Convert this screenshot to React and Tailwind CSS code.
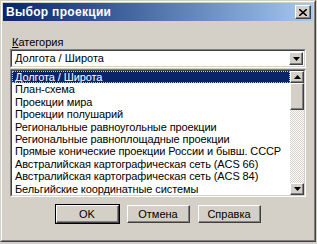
import React from "react";

const items = [
  "Долгота / Широта",
  "План-схема",
  "Проекции мира",
  "Проекции полушарий",
  "Региональные равноугольные проекции",
  "Региональные равноплощадные проекции",
  "Прямые конические проекции России и бывш. СССР",
  "Австралийская картографическая сеть (ACS 66)",
  "Австралийская картографическая сеть (ACS 84)",
  "Бельгийские координатные системы",
];

const raised =
  "border border-t-white border-l-white border-r-[#404040] border-b-[#404040] shadow-[inset_-1px_-1px_0_#808080]";

function Arrow({ up }) {
  return (
    <svg width="7" height="4" viewBox="0 0 7 4">
      {up ? <path d="M3.5 0 L7 4 L0 4 Z" fill="#000" /> : <path d="M0 0 L7 0 L3.5 4 Z" fill="#000" />}
    </svg>
  );
}

function Btn({ children, def }) {
  return (
    <div className={def ? "border border-black" : "border border-transparent"}>
      <div
        className={`w-[63px] h-[18px] flex items-center justify-center bg-[#d4d0c8] text-black text-[11px] ${raised}`}
      >
        {children}
      </div>
    </div>
  );
}

export default function App() {
  return (
    <div
      className="w-[317px] h-[244px] bg-[#d4d0c8] overflow-hidden"
      style={{ fontFamily: '"Liberation Sans", Arial, sans-serif' }}
    >
      <div className="w-[316px] h-[242px] border border-t-[#d4d0c8] border-l-[#d4d0c8] border-r-[#404040] border-b-[#404040]">
        <div className="w-full h-full border border-t-white border-l-white border-r-[#808080] border-b-[#808080] p-[1px] flex flex-col">
          {/* Title bar */}
          <div className="h-[18px] flex items-center justify-between pl-[3px] pr-[2px] bg-gradient-to-r from-[#0a246a] to-[#a6caf0]">
            <span className="text-white font-bold text-[12px] leading-none tracking-[0.3px]">
              Выбор проекции
            </span>
            <div className={`w-[16px] h-[14px] bg-[#d4d0c8] flex items-center justify-center ${raised}`}>
              <svg width="8" height="7" viewBox="0 0 8 7">
                <path d="M0 0 L8 7 M8 0 L0 7" stroke="#000" strokeWidth="1.6" />
              </svg>
            </div>
          </div>

          {/* Body */}
          <div className="flex flex-col px-[7px] pt-[15px]">
            <div className="text-[11px] leading-[13px] text-black pl-[2px]">
              <span className="underline underline-offset-[1px]">К</span>атегория
            </div>
            {/* combo */}
            <div className="h-[19px] bg-white border border-t-[#808080] border-l-[#808080] border-r-white border-b-white">
              <div className="h-full flex items-center border border-t-[#404040] border-l-[#404040] border-r-[#d4d0c8] border-b-[#d4d0c8]">
                <span className="flex-1 text-[11px] text-black pl-[3px]">Долгота / Широта</span>
                <div className={`w-[14px] h-[13px] bg-[#d4d0c8] flex items-center justify-center mr-[1px] ${raised}`}>
                  <Arrow />
                </div>
              </div>
            </div>
            {/* list */}
            <div className="mt-[1px] h-[128px] bg-white border border-t-[#808080] border-l-[#808080] border-r-white border-b-white">
              <div className="h-full flex border border-t-[#404040] border-l-[#404040] border-r-[#d4d0c8] border-b-[#d4d0c8]">
                <div className="flex-1 flex flex-col overflow-hidden">
                  {items.map((t, i) => (
                    <div
                      key={i}
                      className={`h-[12.4px] leading-[12.4px] text-[11px] whitespace-nowrap pl-[3px] tracking-[-0.1px] ${
                        i === 0
                          ? "bg-[#0a246a] text-white outline outline-1 outline-dotted outline-[#a6caf0] -outline-offset-1"
                          : "text-black"
                      }`}
                    >
                      {t}
                    </div>
                  ))}
                </div>
                <div className="w-[14px] flex flex-col bg-[repeating-conic-gradient(#d4d0c8_0%_25%,#ffffff_0%_50%)] bg-[length:2px_2px]">
                  <div className={`h-[12px] bg-[#d4d0c8] flex items-center justify-center ${raised}`}>
                    <Arrow up />
                  </div>
                  <div className={`h-[27px] bg-[#d4d0c8] ${raised}`} />
                  <div className="flex-1" />
                  <div className={`h-[12px] bg-[#d4d0c8] flex items-center justify-center ${raised}`}>
                    <Arrow />
                  </div>
                </div>
              </div>
            </div>
            {/* buttons */}
            <div className="mt-[7px] flex justify-center gap-[6px]">
              <Btn def>OK</Btn>
              <Btn>Отмена</Btn>
              <Btn>Справка</Btn>
            </div>
          </div>
        </div>
      </div>
    </div>
  );
}
